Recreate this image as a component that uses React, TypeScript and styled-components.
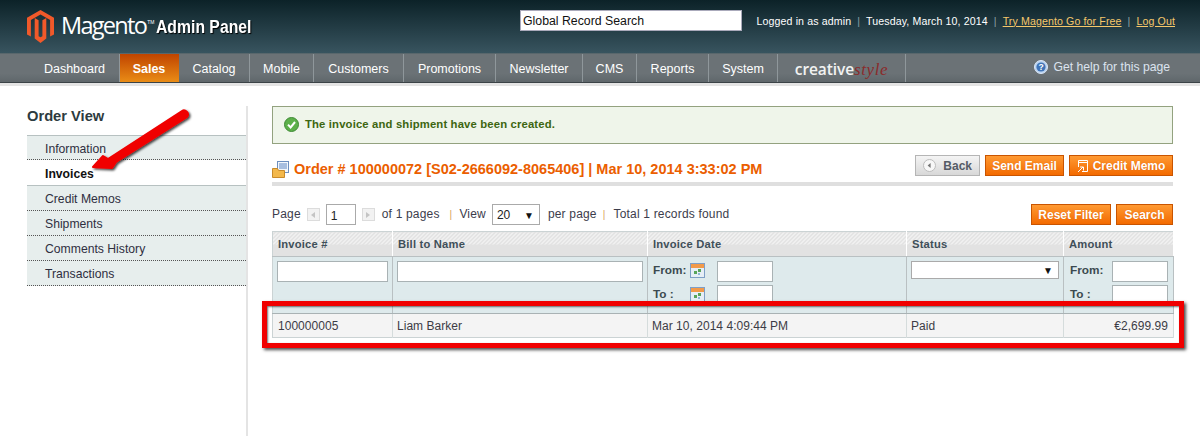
import React from "react";
import styled, { createGlobalStyle } from "styled-components";

const GlobalStyle = createGlobalStyle`
  html, body {
    margin: 0;
    padding: 0;
    background: #fff;
  }
  body {
    font-family: "Liberation Sans", Arial, sans-serif;
    font-size: 12px;
    color: #2f2f2f;
  }
  * { box-sizing: border-box; }
`;

const Page = styled.div`
  position: relative;
  width: 1200px;
  height: 436px;
  overflow: hidden;
`;

const Header = styled.header`
  display: flex;
  height: 53px;
  padding: 10px 25px 0 27px;
  background: linear-gradient(#0c2228, #38545f);
`;

const Logo = styled.div`
  display: flex;
  flex: 0 0 493px;
  align-items: flex-start;
  color: #fff;
`;

const LogoName = styled.span`
  margin: -1px 0 0 7px;
  font-family: "Open Sans", sans-serif;
  font-size: 23.5px;
  line-height: 32px;
  letter-spacing: -1.7px;
`;

const LogoMark = styled.sup`
  font-size: 5px;
  line-height: 1;
  margin: 10px 0 0 1px;
  font-family: "Liberation Sans", sans-serif;
`;

const LogoPanel = styled.span`
  display: inline-block;
  margin: 6px 0 0 2px;
  font-size: 18px;
  line-height: 22px;
  font-weight: 700;
  white-space: nowrap;
  transform: scaleX(0.875);
  transform-origin: left center;
  text-shadow: 1px 1px 1px #000;
`;

const SearchField = styled.input`
  flex: 0 0 222px;
  height: 21px;
  padding: 0 2px;
  border: 1px solid #aab;
  background: #fff;
  font: 12.3px "Liberation Sans", sans-serif;
  color: #111;
`;

const UserBar = styled.div`
  display: flex;
  height: 21px;
  align-items: center;
  margin-left: auto;
  font-size: 10.6px;
  letter-spacing: 0.12px;
  color: #fff;
  white-space: nowrap;
`;

const UserSep = styled.span`
  margin: 0 6px;
  color: #8fa0a6;
`;

const UserLink = styled.a`
  color: #f6c76a;
  text-decoration: underline;
`;

const Nav = styled.nav`
  display: flex;
  height: 30px;
  padding-left: 30px;
  border-top: 1px solid #59676c;
  border-bottom: 1px solid #3b4347;
  background: linear-gradient(#6b7276, #6b7276 70%, #5f676b);
`;

const NavItem = styled.a<{ $active?: boolean; $width: number }>`
  display: flex;
  flex: 0 0 ${(p) => p.$width}px;
  align-items: center;
  justify-content: center;
  padding-top: 1px;
  font-size: 12.5px;
  font-weight: ${(p) => (p.$active ? 700 : 400)};
  color: #fff;
  background: ${(p) => (p.$active ? "linear-gradient(#c04400, #ea8c16)" : "none")};
  border-right: 1px solid ${(p) => (p.$active ? "transparent" : "#8f979b")};
`;

const CreativeLogo = styled.span`
  font-family: "Open Sans", sans-serif;
  font-size: 15.5px;
  font-weight: 600;
  letter-spacing: -0.1px;
  color: #f2f2f2;
`;

const CreativeScript = styled.span`
  font-family: "Liberation Serif", serif;
  font-style: italic;
  font-size: 17px;
  font-weight: 400;
  letter-spacing: 0.6px;
  color: #8a2b2b;
`;

const HelpLink = styled.a`
  display: flex;
  align-items: center;
  gap: 5px;
  margin-left: auto;
  padding: 0 30px 2px 0;
  font-size: 12.2px;
  color: #dbe3ee;
`;

const PageRule = styled.div`
  height: 3px;
  background: #e4e4e4;
`;

const Main = styled.main`
  display: flex;
  height: 350px;
  padding: 20px 27px 0;
`;

const Sidebar = styled.aside`
  flex: 0 0 221px;
  border-right: 2px solid #e4e4e4;
`;

const SideTitle = styled.h3`
  margin: 0;
  height: 29px;
  padding-top: 1px;
  font-size: 14.7px;
  line-height: 18px;
  font-weight: 700;
  color: #2d3b40;
`;

const SideMenu = styled.ul`
  margin: 0;
  padding: 0;
  list-style: none;
  border-top: 1px solid #b7c1c1;
  width: 219px;
`;

const SideItem = styled.li<{ $active?: boolean; $height?: number; $solid?: boolean }>`
  display: flex;
  align-items: center;
  height: ${(p) => p.$height ?? 25}px;
  padding: 2px 0 0 18px;
  font-size: 12.2px;
  font-weight: ${(p) => (p.$active ? 700 : 400)};
  color: ${(p) => (p.$active ? "#111" : "#2f2f3f")};
  background: ${(p) => (p.$active ? "#fff" : "#e7eeed")};
  border-bottom: 1px ${(p) => (p.$solid ? "solid #b7c1c1" : "dotted #555")};
`;

const Content = styled.section`
  flex: 1;
  padding-left: 24px;
  min-width: 0;
`;

const Message = styled.div`
  display: flex;
  align-items: center;
  gap: 6px;
  height: 38px;
  padding: 0 0 2px 11px;
  border: 1px solid #93a27f;
  background: #eff5ea;
  font-size: 11.3px;
  font-weight: 700;
  letter-spacing: 0.15px;
  color: #3d6611;
`;

const TitleBar = styled.div`
  display: flex;
  align-items: flex-end;
  height: 42px;
  padding-bottom: 6px;
  border-bottom: 4px solid #dfdfdf;
`;

const OrderTitle = styled.h3`
  display: flex;
  align-items: center;
  gap: 5px;
  margin: 0 0 -2px;
  font-size: 14.5px;
  line-height: 18px;
  font-weight: 700;
  color: #eb5e00;
  white-space: nowrap;
`;

const ButtonGroup = styled.div`
  display: flex;
  gap: 5px;
  margin-left: auto;
`;

const Button = styled.button<{ $plain?: boolean; $width: number }>`
  display: flex;
  align-items: center;
  justify-content: center;
  gap: 4px;
  width: ${(p) => p.$width}px;
  height: 21px;
  padding: 0;
  font: 700 12px "Liberation Sans", sans-serif;
  color: ${(p) => (p.$plain ? "#555b66" : "#fff")};
  border: 1px solid ${(p) => (p.$plain ? "#b5b5b5" : "#c95400")};
  background: ${(p) =>
    p.$plain
      ? "linear-gradient(#f4f4f4, #d8d8d8)"
      : "linear-gradient(#ff9a33, #f36a00)"};
  text-shadow: ${(p) => (p.$plain ? "none" : "0 0 1px #d85a00")};
`;

const Pager = styled.div`
  display: flex;
  align-items: center;
  height: 21px;
  margin-top: 18px;
  font-size: 12px;
  letter-spacing: 0.18px;
  color: #3c3c4c;
  white-space: nowrap;
`;

const PagerText = styled.span<{ $left?: number }>`
  margin: -2px 0 0 ${(p) => p.$left ?? 0}px;
`;

const PagerArrow = styled.span<{ $left: number; $flip?: boolean }>`
  display: flex;
  align-items: center;
  justify-content: center;
  width: 13px;
  height: 13px;
  margin-left: ${(p) => p.$left}px;
  border: 1px solid #dcdcdc;
  background: #f2f2f2;
  &::after {
    content: "";
    border-style: solid;
    border-width: 3px 4px 3px 0;
    border-color: transparent #c4c4c4 transparent transparent;
    transform: ${(p) => (p.$flip ? "scaleX(-1)" : "none")};
  }
`;

const PagerInput = styled.input`
  width: 30px;
  height: 21px;
  margin-left: 6px;
  padding: 3px 0 0 4px;
  border: 1px solid #aaa;
  font: 12px "Liberation Sans", sans-serif;
  color: #222;
`;

const SelectBox = styled.div<{ $width: number; $left?: number; $height?: number }>`
  display: flex;
  align-items: center;
  justify-content: space-between;
  width: ${(p) => p.$width}px;
  height: ${(p) => p.$height ?? 21}px;
  margin-left: ${(p) => p.$left ?? 0}px;
  padding: 1px 5px 0 4px;
  border: 1px solid #aaa;
  background: #fff;
  font-size: 12px;
  letter-spacing: 0;
  color: #222;
`;

const Caret = styled.span`
  font-size: 10px;
  color: #111;
`;

const Sep = styled.span<{ $left: number }>`
  margin-left: ${(p) => p.$left}px;
  font-size: 10px;
  color: #d9a35a;
`;

const Grid = styled.table`
  width: 901px;
  margin-top: 6px;
  table-layout: fixed;
  border-collapse: collapse;
  border: 1px solid #cbd3d4;
`;

const HeadCell = styled.th`
  height: 25px;
  padding: 0 5px;
  text-align: left;
  font-size: 11.2px;
  letter-spacing: 0.2px;
  font-weight: 700;
  color: #3f4f59;
  border-right: 1px solid #fff;
  border-bottom: 1px solid #b9c0c2;
  background:
    linear-gradient(transparent 50%, #e2e2e2 50%),
    linear-gradient(
        135deg,
        #dedede 25%,
        #f5f5f5 25%,
        #f5f5f5 50%,
        #dedede 50%,
        #dedede 75%,
        #f5f5f5 75%
      )
      0 0 / 4px 4px;
`;

const FilterCell = styled.td`
  height: 57px;
  padding: 4px 4px 0;
  vertical-align: top;
  border-right: 1px solid #b9c0c2;
  border-bottom: 1px solid #a9b2b4;
  background-color: #d5e4e7;
  background-image:
    linear-gradient(rgba(255, 255, 255, 0.22) 1px, transparent 1px),
    linear-gradient(90deg, rgba(255, 255, 255, 0.22) 1px, transparent 1px);
  background-size: 2px 2px;
`;

const FilterInput = styled.input<{ $width?: number }>`
  display: block;
  width: ${(p) => (p.$width ? `${p.$width}px` : "100%")};
  height: 21px;
  padding: 0 3px;
  border: 1px solid #a9b2b4;
  background: #fff;
`;

const RangeRow = styled.div<{ $left: number }>`
  display: flex;
  align-items: center;
  height: 21px;
  margin-bottom: 3px;
  padding-left: ${(p) => p.$left}px;
`;

const RangeLabel = styled.label<{ $width: number }>`
  flex: 0 0 ${(p) => p.$width}px;
  padding-bottom: 4px;
  font-size: 11.8px;
  font-weight: 700;
  color: #3b4a50;
`;

const CalendarWrap = styled.span`
  display: flex;
  flex: 0 0 27px;
  padding-bottom: 2px;
`;

const DataCell = styled.td<{ $right?: boolean }>`
  height: 24px;
  padding: 0 ${(p) => (p.$right ? 5 : 4)}px 0 4px;
  text-align: ${(p) => (p.$right ? "right" : "left")};
  font-size: 12px;
  letter-spacing: 0.03px;
  color: #3c3c46;
  background: #f4f4f4;
  border-right: 1px solid #d5dcdc;
  &:first-child {
    padding-left: 5px;
  }
`;

const HighlightBox = styled.div`
  position: absolute;
  left: 262px;
  top: 301px;
  width: 922px;
  height: 47px;
  border: 5px solid #f00000;
  box-shadow:
    2px 2px 3px rgba(0, 0, 0, 0.7),
    inset 1px 1px 2px rgba(0, 0, 0, 0.55);
`;

const ArrowOverlay = styled.svg`
  position: absolute;
  left: 85px;
  top: 100px;
`;

const MagentoIcon = () => (
  <svg width="27" height="33" viewBox="0 0 27 33">
    <path fill="#f1592a" d="M13.5 0 27 7.8v16.6l-3.9 2.2V10L13.5 4.5 3.9 10v16.6L0 24.4V7.8z" />
    <path fill="#f1592a" d="M11.6 10.2v16l1.9 1.1 1.9-1.1v-16l3.9-2.2v20.5L13.5 33l-5.8-4.5V8z" />
  </svg>
);

const HelpIcon = () => (
  <svg width="14" height="14" viewBox="0 0 14 14">
    <circle cx="7" cy="7" r="6.5" fill="#b9d2f0" stroke="#dbe8f8" />
    <circle cx="7" cy="7" r="4.6" fill="#3f74b8" />
    <text x="7" y="10" textAnchor="middle" fontSize="8.5" fontWeight="700" fill="#fff" fontFamily="Liberation Sans">?</text>
  </svg>
);

const SuccessIcon = () => (
  <svg width="15" height="15" viewBox="0 0 15 15">
    <circle cx="7.5" cy="7.5" r="7" fill="#5cb04a" stroke="#3f8a35" />
    <path d="M4 7.6 6.6 10.4 11 5" fill="none" stroke="#fff" strokeWidth="2" />
  </svg>
);

const OrderIcon = () => (
  <svg width="17" height="17" viewBox="0 0 17 17">
    <rect x="5.5" y="0.5" width="11" height="11" fill="#f3f7fb" stroke="#6c8fc0" />
    <path d="M7 3h8M7 5h8M7 7h8" stroke="#5d86c4" />
    <path fill="#f3b84b" stroke="#c98a2a" d="M0.5 7.5h5l1 2h6v7h-12z" />
  </svg>
);

const CalendarIcon = () => (
  <svg width="15" height="15" viewBox="0 0 15 15">
    <rect x="0.5" y="0.5" width="14" height="14" fill="#e6eef6" stroke="#7f9fc6" />
    <rect x="1" y="1" width="13" height="4" fill="#f29a4a" />
    <rect x="4" y="8" width="3" height="3" fill="#58a45a" />
    <rect x="8" y="6" width="3" height="3" fill="#58a45a" />
    <rect x="8" y="10" width="2" height="2" fill="#8fb7d6" />
  </svg>
);

const BackIcon = () => (
  <svg width="13" height="13" viewBox="0 0 13 13">
    <circle cx="6.5" cy="6.5" r="6" fill="#f7f7f7" stroke="#bcbcbc" />
    <path d="M7.6 4 4.6 6.5l3 2.5z" fill="#777" />
  </svg>
);

const MemoIcon = () => (
  <svg width="12" height="14" viewBox="0 0 12 14" fill="none" stroke="#fff">
    <path d="M1.5 8V1.5h9v11H5" />
    <path d="M1.5 3.5h9" />
    <path d="M1 13 6 8M3 8h3.5v3.5" />
  </svg>
);

const navItems = [
  { label: "Dashboard", width: 90 },
  { label: "Sales", width: 59, active: true },
  { label: "Catalog", width: 71 },
  { label: "Mobile", width: 64 },
  { label: "Customers", width: 90 },
  { label: "Promotions", width: 92 },
  { label: "Newsletter", width: 87 },
  { label: "CMS", width: 54 },
  { label: "Reports", width: 72 },
  { label: "System", width: 69 },
];
const columns = [120, 255, 259, 157, 110];

const RangeFilter = ({ left, labelWidth, inputWidth, calendar }: { left: number; labelWidth: number; inputWidth: number; calendar?: boolean }) => (
  <>
    {["From:", "To :"].map((label) => (
      <RangeRow key={label} $left={left}>
        <RangeLabel $width={labelWidth}>{label}</RangeLabel>
        {calendar && (
          <CalendarWrap>
            <CalendarIcon />
          </CalendarWrap>
        )}
        <FilterInput $width={inputWidth} />
      </RangeRow>
    ))}
  </>
);

const App = () => {
  return (
    <Page>
      <GlobalStyle />
      <Header>
        <Logo>
          <MagentoIcon />
          <LogoName>Magento</LogoName>
          <LogoMark>TM</LogoMark>
          <LogoPanel>Admin Panel</LogoPanel>
        </Logo>
        <SearchField defaultValue="Global Record Search" />
        <UserBar>
          Logged in as admin
          <UserSep>|</UserSep>
          Tuesday, March 10, 2014
          <UserSep>|</UserSep>
          <UserLink>Try Magento Go for Free</UserLink>
          <UserSep>|</UserSep>
          <UserLink>Log Out</UserLink>
        </UserBar>
      </Header>
      <Nav>
        {navItems.map((item) => (
          <NavItem key={item.label} $active={item.active} $width={item.width}>
            {item.label}
          </NavItem>
        ))}
        <NavItem $width={128}>
          <CreativeLogo>
            creative<CreativeScript>style</CreativeScript>
          </CreativeLogo>
        </NavItem>
        <HelpLink>
          <HelpIcon />
          Get help for this page
        </HelpLink>
      </Nav>
      <PageRule />
      <Main>
        <Sidebar>
          <SideTitle>Order View</SideTitle>
          <SideMenu>
            <SideItem $height={24}>Information</SideItem>
            <SideItem $active $height={26} $solid>Invoices</SideItem>
            <SideItem>Credit Memos</SideItem>
            <SideItem>Shipments</SideItem>
            <SideItem>Comments History</SideItem>
            <SideItem>Transactions</SideItem>
          </SideMenu>
        </Sidebar>
        <Content>
          <Message>
            <SuccessIcon />
            The invoice and shipment have been created.
          </Message>
          <TitleBar>
            <OrderTitle>
              <OrderIcon />
              Order # 100000072 [S02-2666092-8065406] | Mar 10, 2014 3:33:02 PM
            </OrderTitle>
            <ButtonGroup>
              <Button $plain $width={65}>
                <BackIcon />
                &nbsp;Back
              </Button>
              <Button $width={79}>Send Email</Button>
              <Button $width={104}>
                <MemoIcon />
                Credit Memo
              </Button>
            </ButtonGroup>
          </TitleBar>
          <Pager>
            <PagerText>Page</PagerText>
            <PagerArrow $left={6} />
            <PagerInput defaultValue="1" />
            <PagerArrow $left={6} $flip />
            <PagerText $left={7}>of 1 pages</PagerText>
            <Sep $left={10}>|</Sep>
            <PagerText $left={7}>View</PagerText>
            <SelectBox $width={48} $left={6}>
              20
              <Caret>▼</Caret>
            </SelectBox>
            <PagerText $left={8}>per page</PagerText>
            <Sep $left={6}>|</Sep>
            <PagerText $left={8}>Total 1 records found</PagerText>
            <ButtonGroup>
              <Button $width={80}>Reset Filter</Button>
              <Button $width={57}>Search</Button>
            </ButtonGroup>
          </Pager>
          <Grid>
            <colgroup>
              {columns.map((width, i) => (
                <col key={i} style={{ width }} />
              ))}
            </colgroup>
            <thead>
              <tr>
                <HeadCell>Invoice #</HeadCell>
                <HeadCell>Bill to Name</HeadCell>
                <HeadCell>Invoice Date</HeadCell>
                <HeadCell>Status</HeadCell>
                <HeadCell>Amount</HeadCell>
              </tr>
              <tr>
                <FilterCell>
                  <FilterInput />
                </FilterCell>
                <FilterCell>
                  <FilterInput />
                </FilterCell>
                <FilterCell>
                  <RangeFilter left={1} labelWidth={37} inputWidth={56} calendar />
                </FilterCell>
                <FilterCell>
                  <SelectBox $width={148} $height={18}>
                    <span />
                    <Caret>▼</Caret>
                  </SelectBox>
                </FilterCell>
                <FilterCell>
                  <RangeFilter left={2} labelWidth={42} inputWidth={56} />
                </FilterCell>
              </tr>
            </thead>
            <tbody>
              <tr>
                <DataCell>100000005</DataCell>
                <DataCell>Liam Barker</DataCell>
                <DataCell>Mar 10, 2014 4:09:44 PM</DataCell>
                <DataCell>Paid</DataCell>
                <DataCell $right>€2,699.99</DataCell>
              </tr>
            </tbody>
          </Grid>
        </Content>
      </Main>
      <HighlightBox />
      <ArrowOverlay width="115" height="80" viewBox="0 0 115 80">
        <defs>
          <filter id="arrowShadow" x="-20%" y="-20%" width="140%" height="140%">
            <feDropShadow dx="1.5" dy="1.5" stdDeviation="1.2" floodColor="#000" floodOpacity="0.75" />
          </filter>
        </defs>
        <path
          fill="#f00000"
          filter="url(#arrowShadow)"
          stroke="#f00000"
          strokeLinejoin="round"
          strokeWidth="2"
          d="M8 67 18 56 23 59 97 11C100 9 105 13 102 17L31 62 27 68z"
        />
      </ArrowOverlay>
    </Page>
  );
};

export default App;
